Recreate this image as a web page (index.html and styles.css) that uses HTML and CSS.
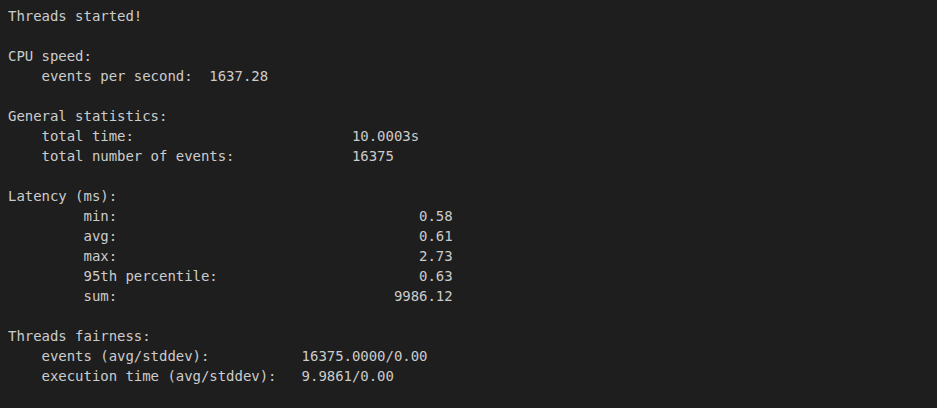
FILE: index.html
```html
<!DOCTYPE html>
<html>
<head>
<meta charset="utf-8">
<link rel="stylesheet" href="styles.css">
</head>
<body>
<pre class="term">Threads started!

CPU speed:
    events per second:  1637.28

General statistics:
    total time:                          10.0003s
    total number of events:              16375

Latency (ms):
         min:                                    0.58
         avg:                                    0.61
         max:                                    2.73
         95th percentile:                        0.63
         sum:                                 9986.12

Threads fairness:
    events (avg/stddev):           16375.0000/0.00
    execution time (avg/stddev):   9.9861/0.00
</pre>
</body>
</html>
```

FILE: styles.css
```css
html, body {
  margin: 0;
  padding: 0;
  background: #1e1e1e;
  height: 100%;
}
.term {
  margin: 0;
  padding: 6px 8px 0 8px;
  font-family: "DejaVu Sans Mono", monospace;
  font-size: 14px;
  line-height: 20px;
  letter-spacing: -0.04px;
  color: #cccccc;
}
```
